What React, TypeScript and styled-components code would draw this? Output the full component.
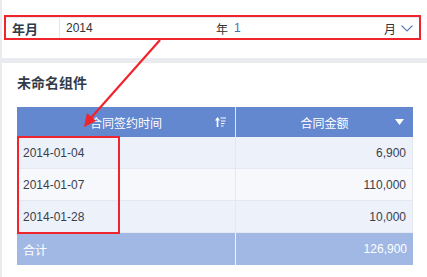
import React from "react";
import styled, { createGlobalStyle } from "styled-components";

const Global = createGlobalStyle`
  html, body { margin: 0; padding: 0; background: #e9ebef; }
  body { font-family: "Liberation Sans", "Noto Sans CJK SC", sans-serif; font-size: 12px; color: #333; }
  * { box-sizing: border-box; }
`;

const Page = styled.div`
  position: relative;
  width: 427px;
  height: 277px;
  padding-left: 2px;
  display: flex;
  flex-direction: column;
  gap: 5px;
  overflow: hidden;
`;

const TopPanel = styled.div`
  background: #fff;
  height: 58px;
  padding: 15px 6px 0 2px;
`;

const Annot = styled.div`
  border: 2px solid #f0242c;
  height: 25px;
  display: flex;
`;

const Filter = styled.div`
  flex: 1;
  display: flex;
  align-items: center;
  border-top: 1px solid #e6e8ec;
`;

const Label = styled.div`
  width: 54px;
  padding-left: 6px;
  font-size: 13px;
  font-weight: bold;
  color: #2f3a4b;
  border-right: 1px solid #e3e5ea;
  height: 100%;
  display: flex;
  align-items: center;
`;

const Seg = styled.div<{ $w?: number }>`
  ${(p) => (p.$w ? `width: ${p.$w}px;` : "flex: 1;")}
  display: flex;
  justify-content: space-between;
  align-items: center;
  padding-left: 6px;
  font-size: 12px;
  color: #333;
`;

const Num = styled.span<{ $blue?: boolean }>`
  color: ${(p) => (p.$blue ? "#3f6fb6" : "#333")};
`;

const Chevron = styled.svg`
  margin: 0 6px 0 5px;
`;

const Card = styled.div`
  flex: 1;
  background: #fff;
  padding: 12px 14px 0 15px;
`;

const Title = styled.div`
  font-size: 14px;
  font-weight: bold;
  line-height: 16px;
  color: #333b48;
  margin-bottom: 16px;
`;

const Table = styled.div`
  width: 396px;
  display: grid;
  grid-template-columns: 219px 1fr;
`;

const Head = styled.div<{ $first?: boolean }>`
  position: relative;
  height: 30px;
  background: #6388d0;
  color: #fff;
  display: flex;
  align-items: center;
  justify-content: center;
  ${(p) => (p.$first ? "border-right: 1px solid #dfe6f4;" : "")}
`;

const HeadIcon = styled.svg`
  position: absolute;
  right: 9px;
  top: 50%;
  transform: translateY(-50%);
`;

const Cell = styled.div<{ $alt?: boolean; $right?: boolean; $first?: boolean }>`
  height: 32px;
  background: ${(p) => (p.$alt ? "#f6f8fc" : "#edf2fa")};
  border-bottom: 1px solid #e3e8f1;
  ${(p) => (p.$first ? "border-right: 1px solid #e3e8f1;" : "border-right: 1px solid #e3e8f1;")}
  display: flex;
  align-items: center;
  justify-content: ${(p) => (p.$right ? "flex-end" : "flex-start")};
  padding: 0 6px;
  color: #3a404c;
`;

const Total = styled.div<{ $right?: boolean; $first?: boolean }>`
  height: 32px;
  background: #a0b8e3;
  color: #fff;
  display: flex;
  align-items: center;
  justify-content: ${(p) => (p.$right ? "flex-end" : "flex-start")};
  padding: 0 6px;
  ${(p) => (p.$first ? "border-right: 1px solid #eef2fa;" : "")}
`;

const Overlay = styled.svg`
  position: absolute;
  left: 0;
  top: 0;
  pointer-events: none;
`;

const DateBox = styled.div`
  position: absolute;
  left: 17px;
  top: 136px;
  width: 103px;
  height: 98px;
  border: 2px solid #f0242c;
  pointer-events: none;
`;

const rows = [
  { d: "2014-01-04", v: "6,900" },
  { d: "2014-01-07", v: "110,000" },
  { d: "2014-01-28", v: "10,000" },
];

export default function App() {
  return (
    <>
      <Global />
      <Page>
        <TopPanel>
          <Annot>
            <Filter>
              <Label>年月</Label>
              <Seg $w={168}>
                <Num>2014</Num>
                <span>年</span>
              </Seg>
              <Seg>
                <Num $blue>1</Num>
                <span>月</span>
              </Seg>
              <Chevron width="12" height="7" viewBox="0 0 12 7">
                <path d="M0.5 0.5 L6 6 L11.5 0.5" fill="none" stroke="#5a7db5" strokeWidth="1.1" />
              </Chevron>
            </Filter>
          </Annot>
        </TopPanel>
        <Card>
          <Title>未命名组件</Title>
          <Table>
            <Head $first>
              合同签约时间
              <HeadIcon width="11" height="10" viewBox="0 0 11 10">
                <path d="M2.5 1.5 V10" stroke="#fff" strokeWidth="1.6" />
                <path d="M0 3.5 L2.5 0 L5 3.5 Z" fill="#fff" />
                <path d="M5.5 1 H11 M6 4 H10.5 M6 6.5 H9.5 M6 9 H8.5" stroke="#fff" strokeWidth="1" />
              </HeadIcon>
            </Head>
            <Head>
              合同金额
              <HeadIcon width="9" height="6" viewBox="0 0 9 6">
                <path d="M0 0 H9 L4.5 6 Z" fill="#fff" />
              </HeadIcon>
            </Head>
            {rows.map((r, i) => (
              <React.Fragment key={r.d}>
                <Cell $alt={i % 2 === 1} $first>{r.d}</Cell>
                <Cell $alt={i % 2 === 1} $right>{r.v}</Cell>
              </React.Fragment>
            ))}
            <Total $first>合计</Total>
            <Total $right>126,900</Total>
          </Table>
        </Card>
        <DateBox />
        <Overlay width="427" height="277" viewBox="0 0 427 277">
          <line x1="160" y1="40" x2="90" y2="119" stroke="#f0242c" strokeWidth="2.2" />
          <path d="M84 127 L87 113 L96 121 Z" fill="#f0242c" />
        </Overlay>
      </Page>
    </>
  );
}
